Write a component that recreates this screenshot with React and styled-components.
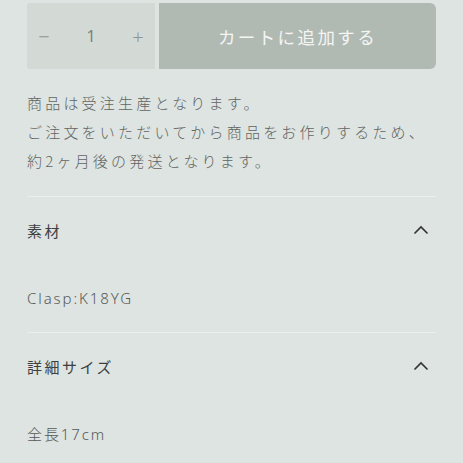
import React from "react";
import styled, { createGlobalStyle } from "styled-components";

const Global = createGlobalStyle`
  html, body { margin: 0; padding: 0; background: #dee4e1; }
  body { font-family: "Noto Sans CJK JP", "Noto Sans", sans-serif; }
`;

const Page = styled.div`
  width: 463px;
  height: 463px;
  overflow: hidden;
  background: #dee4e1;
  padding: 3px 27px 0 27px;
  box-sizing: border-box;
`;

const CartRow = styled.div`
  display: flex;
  height: 66px;
  gap: 4px;
`;

const Qty = styled.div`
  width: 128px;
  display: flex;
  align-items: center;
  justify-content: space-between;
  background: #d3dad6;
  border-radius: 3px 0 0 3px;
  padding: 0 10px;
  box-sizing: border-box;
  color: #8a8f8c;
  font-family: "Noto Sans", "Noto Sans CJK JP", sans-serif;
  font-size: 17px;
`;

const QtyBtn = styled.span`
  width: 14px;
  text-align: center;
  font-size: 20px;
  font-weight: 300;
  color: #8f9491;
`;

const QtyValue = styled.span`
  font-size: 16px;
  color: #7d827f;
`;

const AddButton = styled.div`
  flex: 1;
  background: #b1b9b3;
  border-radius: 0 6px 6px 0;
  display: flex;
  align-items: center;
  justify-content: center;
  color: #f4f6f4;
  font-size: 17.5px;
  letter-spacing: 2.4px;
`;

const Notice = styled.p`
  margin: 19px 0 21px;
  font-size: 15px;
  font-weight: 300;
  line-height: 29px;
  letter-spacing: 3.2px;
  color: #616563;
  white-space: nowrap;
`;

const Section = styled.section`
  border-top: 1.5px solid #eaeeec;
`;

const Header = styled.div`
  height: 66px;
  display: flex;
  align-items: center;
  justify-content: space-between;
  color: #3d3f3e;
  font-size: 15px;
  letter-spacing: 2.5px;
`;

const Chevron = styled.svg`
  width: 16px;
  height: 10px;
  margin-right: 7px;
`;

const Content = styled.div`
  padding: 23px 0 22px;
  font-family: "Noto Sans", "Noto Sans CJK JP", sans-serif;
  font-size: 15px;
  font-weight: 300;
  line-height: 24px;
  letter-spacing: 1.9px;
  color: #555957;
`;

const Up = () => (
  <Chevron viewBox="0 0 16 10">
    <path d="M1.5 8.5 L8 2 L14.5 8.5" fill="none" stroke="#333" strokeWidth="1.6" />
  </Chevron>
);

export default function App() {
  return (
    <Page>
      <Global />
      <CartRow>
        <Qty>
          <QtyBtn>−</QtyBtn>
          <QtyValue>1</QtyValue>
          <QtyBtn>+</QtyBtn>
        </Qty>
        <AddButton>カートに追加する</AddButton>
      </CartRow>
      <Notice>
        商品は受注生産となります。
        <br />
        ご注文をいただいてから商品をお作りするため、
        <br />
        約2ヶ月後の発送となります。
      </Notice>
      <Section>
        <Header>
          素材
          <Up />
        </Header>
        <Content>Clasp:K18YG</Content>
      </Section>
      <Section>
        <Header>
          詳細サイズ
          <Up />
        </Header>
        <Content>全長17cm</Content>
      </Section>
    </Page>
  );
}
